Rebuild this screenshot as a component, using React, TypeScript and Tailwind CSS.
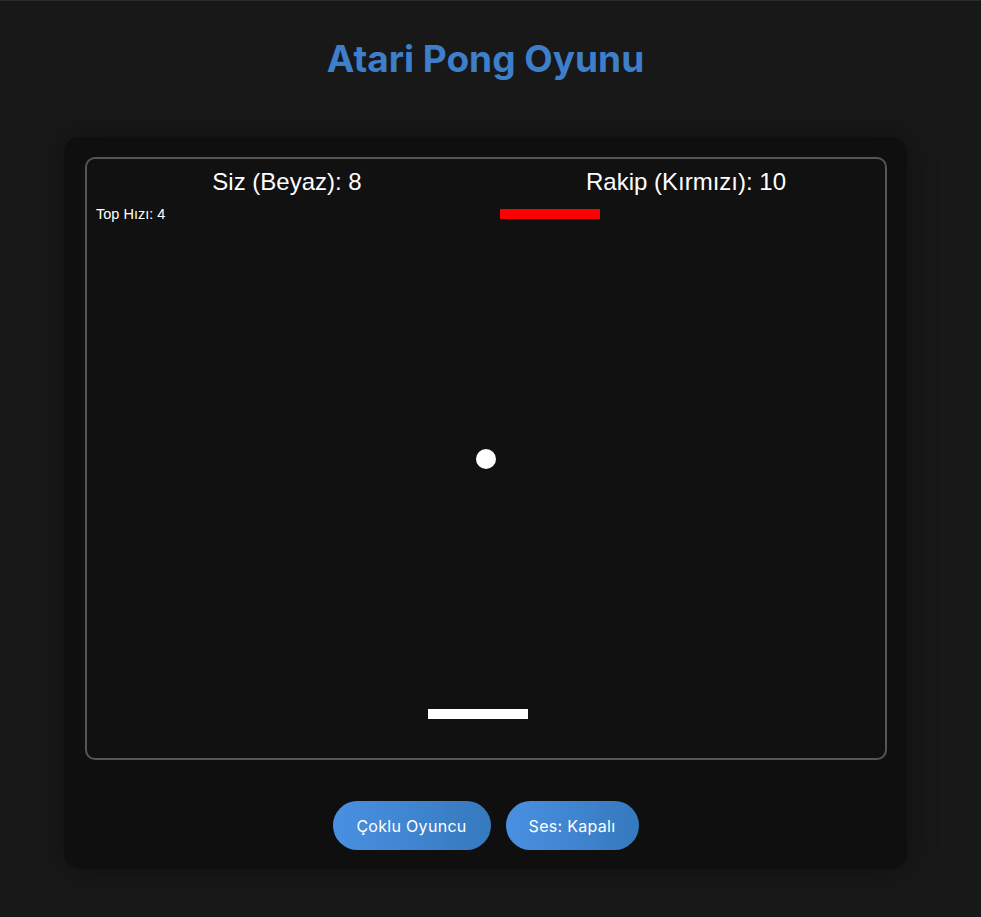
import React from 'react';

const poppins = { fontFamily: 'Inter, "Noto Sans", sans-serif' };
const arial = "'Liberation Sans', Arial, sans-serif";

function GameCanvas() {
  // oyun alanı: 800x600 tuval gibi çiziliyor
  return (
    <div className="mx-auto w-[802px] h-[603px] rounded-[10px] border-2 border-[#555] bg-[#111] overflow-hidden">
      <svg width="798" height="599" viewBox="0 0 798 599" className="block">
        <text x="200" y="31" fill="#fff" fontSize="24" textAnchor="middle" fontFamily={arial}>
          Siz (Beyaz): 8
        </text>
        <text x="599" y="31" fill="#fff" fontSize="24" textAnchor="middle" fontFamily={arial}>
          Rakip (Kırmızı): 10
        </text>
        <text x="9" y="60" fill="#fff" fontSize="14.5" fontFamily={arial}>
          Top Hızı: 4
        </text>
        <rect x="413" y="50" width="100" height="10" fill="#ff0000" />
        <circle cx="399" cy="300" r="10" fill="#fff" />
        <rect x="341" y="550" width="100" height="10" fill="#fff" />
      </svg>
    </div>
  );
}

export default function App() {
  return (
    <main className="min-h-[917px] border-t border-[#2c2c2c] bg-[#181818]" style={poppins}>
      <div className="w-[971px] flex flex-col items-center">
        <h1 className="mt-[35px] text-[37px] leading-[45px] font-bold text-[#3d7fcb]">Atari Pong Oyunu</h1>

        <div className="mt-[56px] w-[843px] rounded-[15px] bg-[#0f0f0f] pt-[20px] pb-[19px] shadow-[0_0_30px_rgba(0,0,0,0.35)]">
          <GameCanvas />
          <div className="mt-[41px] flex justify-center gap-[15px]">
            <button className="h-[49px] w-[158px] rounded-full bg-gradient-to-r from-[#4a90e2] to-[#357abd] text-[16px] tracking-[0.3px] text-white">
              Çoklu Oyuncu
            </button>
            <button className="h-[49px] w-[133px] rounded-full bg-gradient-to-r from-[#4a90e2] to-[#357abd] text-[16px] tracking-[0.3px] text-white">
              Ses: Kapalı
            </button>
          </div>
        </div>
      </div>
    </main>
  );
}
